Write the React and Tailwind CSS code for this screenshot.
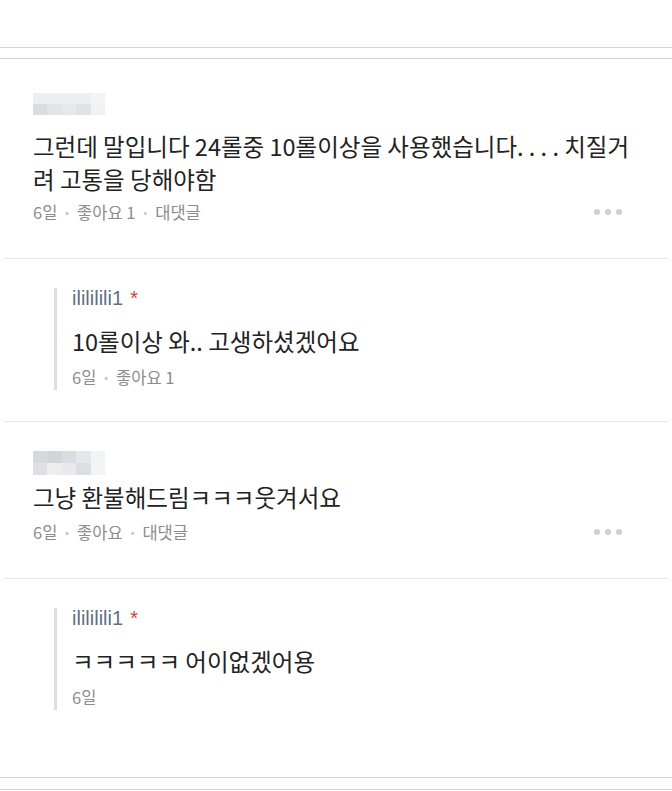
import React from 'react'

const KR = { fontFamily: '"Noto Sans CJK KR", "Noto Sans", sans-serif' }

function Blur({ cells, rowH }) {
  return (
    <div className="grid grid-cols-5 w-[72px]">
      {cells.map((c, i) => (
        <div key={i} className={rowH} style={{ backgroundColor: c }} />
      ))}
    </div>
  )
}

function Dot() {
  return <span className="mx-[8px] text-[#c4c4c4] text-[11px]">•</span>
}

function MoreDots() {
  return (
    <div className="flex gap-[5px] mr-[20px]">
      <span className="w-[6px] h-[6px] rounded-full bg-[#cfcfcf]" />
      <span className="w-[6px] h-[6px] rounded-full bg-[#cfcfcf]" />
      <span className="w-[6px] h-[6px] rounded-full bg-[#cfcfcf]" />
    </div>
  )
}

function Comment({ cells, rowH, text, meta, pt, gap, metaGap }) {
  return (
    <div className={`pl-[33px] pr-[30px] ${pt} pb-[36px]`}>
      <Blur cells={cells} rowH={rowH} />
      <p className={`${gap} text-[23.5px] leading-[33px] text-[#222]`}>{text}</p>
      <div className={`${metaGap} flex items-center justify-between h-[20px]`}>
        <div className="flex items-center text-[16.5px] text-[#8c8c8c]">
          {meta.map((m, i) => (
            <React.Fragment key={i}>
              {i > 0 && <Dot />}
              <span>{m}</span>
            </React.Fragment>
          ))}
        </div>
        <MoreDots />
      </div>
    </div>
  )
}

function Reply({ text, meta, pb }) {
  return (
    <div className={`pl-[54px] pt-[29px] ${pb}`}>
      <div className="border-l-[3px] border-[#dedede] pl-[15px] pb-[3px]">
        <div className="h-[20px] flex items-center text-[20px] leading-[20px]" style={{ fontFamily: '"Liberation Sans", Arial, sans-serif' }}>
          <span className="text-[#5f6f84]">ilililili1</span>
          <span className="ml-[7px] text-[#c9463d]">*</span>
        </div>
        <p className="mt-[17px] text-[23.5px] leading-[33px] text-[#222]">{text}</p>
        <div className="mt-[9px] flex items-center h-[20px] text-[16.5px] text-[#8c8c8c]">
          {meta.map((m, i) => (
            <React.Fragment key={i}>
              {i > 0 && <Dot />}
              <span>{m}</span>
            </React.Fragment>
          ))}
        </div>
      </div>
    </div>
  )
}

function Divider() {
  return <div className="mx-[5px] h-px bg-[#e4e4e4]" />
}

export default function App() {
  const c1 = ['#eceef1', '#eceef1', '#eceef1', '#eceef1', '#f3f4f6', '#d9dce0', '#e2e5e8', '#e6e8eb', '#dfe2e6', '#f0f1f3']
  const c2 = ['#d7d8dd', '#d2d4d9', '#dadce0', '#e6e7ea', '#f2f3f4', '#dfe0e4', '#eceef0', '#e8e9ec', '#dcdee2', '#f4f4f6']
  return (
    <div className="w-[672px] h-[791px] bg-white overflow-hidden" style={KR}>
      <div className="h-[47px]" />
      <div className="h-[12px] border-y border-[#d3d3d3]" />

      <Comment
        cells={c1}
        rowH="h-[11px]"
        pt="pt-[34px]"
        gap="mt-[15px]"
        metaGap="mt-[6px]"
        text="그런데 말입니다 24롤중 10롤이상을 사용했습니다. . . . 치질거려 고통을 당해야함"
        meta={['6일', '좋아요 1', '대댓글']}
      />
      <Divider />
      <Reply text="10롤이상 와.. 고생하셨겠어요" meta={['6일', '좋아요 1']} pb="pb-[31px]" />
      <Divider />
      <Comment
        cells={c2}
        rowH="h-[12px]"
        pt="pt-[29px]"
        gap="mt-[6px]"
        metaGap="mt-[8px]"
        text="그냥 환불해드림ㅋㅋㅋ웃겨서요"
        meta={['6일', '좋아요', '대댓글']}
      />
      <Divider />
      <Reply text="ㅋㅋㅋㅋㅋ 어이없겠어용" meta={['6일']} pb="pb-[67px]" />

      <div className="h-[13px] border-y border-[#d3d3d3]" />
    </div>
  )
}
